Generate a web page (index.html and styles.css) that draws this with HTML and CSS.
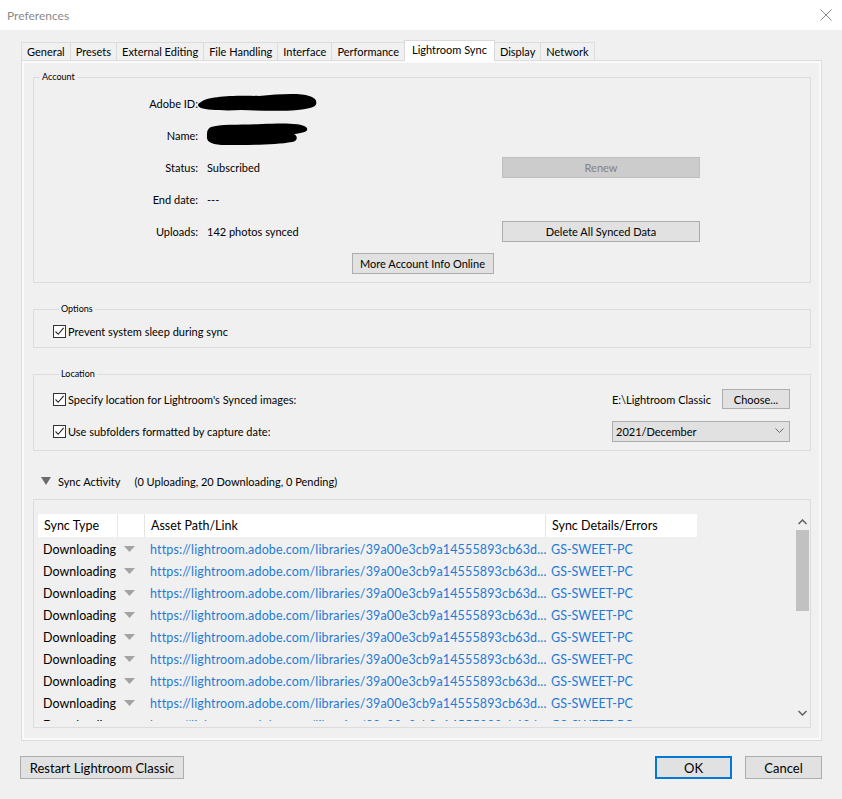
FILE: index.html
```html
<!DOCTYPE html>
<html lang="en">
<head>
    <meta charset="UTF-8">
    <title>Preferences</title>
    <link rel="stylesheet" href="styles.css">
</head>
<body>
    <div class="titlebar">
        <span class="title">Preferences</span>
        <svg class="close" width="12" height="12" viewBox="0 0 12 12">
            <path d="M0.5 0.5 L11.5 11.5 M11.5 0.5 L0.5 11.5" stroke="#8c8c8c" stroke-width="1" fill="none"/>
        </svg>
    </div>

    <div class="dialog">
        <div class="tabs">
            <div class="tab">General</div>
            <div class="tab">Presets</div>
            <div class="tab">External Editing</div>
            <div class="tab">File Handling</div>
            <div class="tab">Interface</div>
            <div class="tab">Performance</div>
            <div class="tab active">Lightroom Sync</div>
            <div class="tab">Display</div>
            <div class="tab">Network</div>
        </div>

        <div class="panel">
            <!-- Account -->
            <fieldset class="group account">
                <legend>Account</legend>
                <div class="acc-row">
                    <span class="label">Adobe ID:</span>
                    <span class="value">
                        <svg class="redact id" width="122" height="20" viewBox="0 0 122 20">
                            <path d="M4 9 C10 3 40 2 62 3 C82 1 104 0 112 3 C121 5 121 12 116 14 C104 19 70 18 44 17 C28 18 10 17 4 15 C0 13 0 11 4 9 Z" fill="#000"/>
                        </svg>
                    </span>
                </div>
                <div class="acc-row">
                    <span class="label">Name:</span>
                    <span class="value">
                        <svg class="redact name" width="104" height="24" viewBox="0 0 104 24">
                            <path d="M5 4 C14 1 36 2 56 1 C76 0 96 0 100 4 C104 8 98 10 88 11 C92 13 92 18 86 19 C70 22 40 22 20 22 C6 22 0 19 1 13 C1 9 1 6 5 4 Z" fill="#000"/>
                        </svg>
                    </span>
                </div>
                <div class="acc-row">
                    <span class="label">Status:</span>
                    <span class="value">Subscribed</span>
                    <button class="btn wide" disabled>Renew</button>
                </div>
                <div class="acc-row">
                    <span class="label">End date:</span>
                    <span class="value">---</span>
                </div>
                <div class="acc-row">
                    <span class="label">Uploads:</span>
                    <span class="value">142 photos synced</span>
                    <button class="btn wide">Delete All Synced Data</button>
                </div>
                <div class="acc-row center">
                    <button class="btn more">More Account Info Online</button>
                </div>
            </fieldset>

            <!-- Options -->
            <fieldset class="group options">
                <legend>Options</legend>
                <label class="check-row">
                    <span class="checkbox"><svg width="11" height="11" viewBox="0 0 11 11"><path d="M1.5 5.5 L4.2 8.3 L9.6 1.8" stroke="#222" stroke-width="1.1" fill="none"/></svg></span>
                    Prevent system sleep during sync
                </label>
            </fieldset>

            <!-- Location -->
            <fieldset class="group location">
                <legend>Location</legend>
                <div class="loc-row">
                    <label class="check-row">
                        <span class="checkbox"><svg width="11" height="11" viewBox="0 0 11 11"><path d="M1.5 5.5 L4.2 8.3 L9.6 1.8" stroke="#222" stroke-width="1.1" fill="none"/></svg></span>
                        Specify location for Lightroom's Synced images:
                    </label>
                    <div class="loc-right">
                        <span class="path">E:\Lightroom Classic</span>
                        <button class="btn choose">Choose...</button>
                    </div>
                </div>
                <div class="loc-row">
                    <label class="check-row">
                        <span class="checkbox"><svg width="11" height="11" viewBox="0 0 11 11"><path d="M1.5 5.5 L4.2 8.3 L9.6 1.8" stroke="#222" stroke-width="1.1" fill="none"/></svg></span>
                        Use subfolders formatted by capture date:
                    </label>
                    <div class="select">
                        <span>2021/December</span>
                        <svg width="9" height="6" viewBox="0 0 9 6"><path d="M0.5 0.5 L4.5 4.5 L8.5 0.5" stroke="#666" stroke-width="1" fill="none"/></svg>
                    </div>
                </div>
            </fieldset>

            <!-- Sync activity -->
            <div class="activity-head">
                <svg width="10" height="8" viewBox="0 0 10 8"><path d="M0 0 L10 0 L5 8 Z" fill="#6b6b6b"/></svg>
                <span class="act-title">Sync Activity</span>
                <span class="act-count">(0 Uploading, 20 Downloading, 0 Pending)</span>
            </div>

            <div class="activity">
                <div class="grid-wrap">
                    <div class="grid">
                        <div class="hcell c1">Sync Type</div>
                        <div class="hcell c2"></div>
                        <div class="hcell c3">Asset Path/Link</div>
                        <div class="hcell c4">Sync Details/Errors</div>
                    </div>
                    <div class="rows" id="rows"></div>
                </div>
                <div class="scrollbar">
                    <svg class="arrow" width="9" height="6" viewBox="0 0 9 6"><path d="M0.5 5 L4.5 1 L8.5 5" stroke="#606060" stroke-width="1.5" fill="none"/></svg>
                    <div class="track"><div class="thumb"></div></div>
                    <svg class="arrow" width="9" height="6" viewBox="0 0 9 6"><path d="M0.5 1 L4.5 5 L8.5 1" stroke="#606060" stroke-width="1.5" fill="none"/></svg>
                </div>
            </div>
        </div>

        <div class="footer">
            <button class="btn restart">Restart Lightroom Classic</button>
            <div class="footer-right">
                <button class="btn ok">OK</button>
                <button class="btn cancel">Cancel</button>
            </div>
        </div>
    </div>

    <script>
        // rows of sync activity
        const rows = document.getElementById('rows');
        for (let i = 0; i < 9; i++) {
            const row = document.createElement('div');
            row.className = 'row';
            row.innerHTML =
                '<div class="c1">Downloading</div>' +
                '<div class="c2"><svg width="11" height="6" viewBox="0 0 11 6"><path d="M0 0 L11 0 L5.5 6 Z" fill="#a3a3a3"/></svg></div>' +
                '<div class="c3 link">https://lightroom.adobe.com/libraries/39a00e3cb9a14555893cb63d...</div>' +
                '<div class="c4 link">GS-SWEET-PC</div>';
            rows.appendChild(row);
        }
    </script>
</body>
</html>
```

FILE: styles.css
```css
:root {
    --bg: #f0f0f0;
    --line: #dcdcdc;
    --btn: #e1e1e1;
    --btn-border: #adadad;
    --link: #1f7ad4;
}

body {
    margin: 0;
    background: var(--bg);
    font-family: Lato, "Noto Sans", sans-serif;
    font-size: 11px;
    color: #000;
    width: 842px;
    height: 799px;
    overflow: hidden;
}

.titlebar {
    height: 30px;
    background: #fff;
    display: flex;
    align-items: center;
    justify-content: space-between;
    padding: 0 10px 0 7px;
}

.title {
    color: #8a8a8a;
    font-size: 12px;
}

.dialog {
    padding: 10px 20px 0 21px;
}

/* tabs */
.tabs {
    display: flex;
    align-items: flex-end;
    height: 20px;
}

.tab {
    height: 17px;
    line-height: 17px;
    padding: 0 5px;
    font-size: 11px;
    border: 1px solid var(--line);
    border-bottom: none;
    margin-left: -1px;
    background: var(--bg);
}

.tab:first-child {
    margin-left: 0;
}

.tab.active {
    height: 20px;
    line-height: 18px;
    background: #fff;
    padding: 0 7px;
    position: relative;
    z-index: 1;
    margin-bottom: -1px;
    border-color: #d9d9d9;
}

.panel {
    border: 1px solid var(--line);
    box-shadow: inset 0 0 0 2px #fafafa;
    padding: 10px 10px 12px 11px;
}

/* group boxes */
.group {
    margin: 0;
    border: 1px solid var(--line);
    padding: 0;
    min-width: 0;
}

.group legend {
    font-size: 9px;
    line-height: 12px;
    padding: 0 2px;
    margin-left: 6px;
}

.account {
    padding: 4px 0 3px;
}

.acc-row {
    display: flex;
    align-items: center;
    height: 32px;
    white-space: nowrap;
}

.acc-row .label {
    width: 164px;
    text-align: right;
}

.acc-row .value {
    width: 295px;
    margin-left: 9px;
    display: flex;
    align-items: center;
}

.acc-row.center {
    justify-content: center;
}

.redact.id {
    margin-left: -10px;
}

.redact.name {
    margin-left: -1px;
}

.btn {
    font-family: inherit;
    font-size: 11px;
    background: var(--btn);
    border: 1px solid var(--btn-border);
    height: 21px;
    padding: 0;
    color: #000;
    white-space: nowrap;
}

.btn.wide {
    width: 198px;
}

.btn:disabled {
    background: #cccccc;
    border-color: #bfbfbf;
    color: #838383;
}

.btn.more {
    width: 142px;
    margin-left: 1px;
}

.options {
    margin-top: 20px;
    padding: 6px 19px 6px;
}

.check-row {
    display: flex;
    align-items: center;
    height: 20px;
    gap: 2px;
    white-space: nowrap;
}

.checkbox {
    width: 11px;
    height: 11px;
    border: 1px solid #333;
    background: #fff;
    display: flex;
}

.location {
    margin-top: 20px;
    padding: 3px 20px 3px 19px;
}

.loc-row {
    display: flex;
    align-items: center;
    justify-content: space-between;
    height: 32px;
}

.loc-right {
    display: flex;
    align-items: center;
    gap: 11px;
    white-space: nowrap;
}

.btn.choose {
    width: 68px;
    height: 20px;
}

.select {
    width: 168px;
    height: 19px;
    border: 1px solid var(--btn-border);
    background: var(--btn);
    display: flex;
    align-items: center;
    justify-content: space-between;
    padding: 0 5px 0 3px;
}

/* sync activity */
.activity-head {
    display: flex;
    align-items: center;
    height: 20px;
    margin-top: 20px;
    padding-left: 8px;
}

.act-title {
    margin-left: 7px;
}

.act-count {
    margin-left: 14px;
}

.activity {
    margin-top: 8px;
    border: 1px solid var(--line);
    height: 229px;
    display: flex;
    padding: 14px 0 0 4px;
    box-sizing: border-box;
}

.grid-wrap {
    flex: 1;
    height: 207px;
    overflow: hidden;
}

.grid {
    display: flex;
    height: 23px;
    font-size: 12.5px;
}

.hcell {
    background: #fff;
    line-height: 23px;
    padding-left: 6px;
    box-sizing: border-box;
    border-right: 1px solid #e6e6e6;
    white-space: nowrap;
}

.hcell.c4 {
    border-right: none;
}

.c1 { width: 80px; flex: none; }
.c2 { width: 27px; flex: none; }
.c3 { width: 401px; flex: none; }
.c4 { width: 151px; flex: none; }

.rows {
    padding-top: 1px;
}

.row {
    display: flex;
    height: 22px;
    align-items: center;
    font-size: 12.5px;
    white-space: nowrap;
}

.row > div {
    padding-left: 5px;
    box-sizing: border-box;
}

.row .c2 {
    display: flex;
    align-items: center;
    padding-left: 6px;
}

.row .c3 {
    letter-spacing: 0.15px;
}

.link {
    color: var(--link);
}

.scrollbar {
    width: 15px;
    height: 207px;
    display: flex;
    flex-direction: column;
    align-items: center;
}

.scrollbar .arrow {
    margin: 5px 0;
}

.track {
    flex: 1;
    width: 100%;
}

.thumb {
    width: 13px;
    margin: 0 auto;
    height: 81px;
    background: #c1c1c1;
}

.footer {
    display: flex;
    justify-content: space-between;
    margin-top: 15px;
    margin-left: -1px;
}

.btn.restart {
    width: 164px;
    height: 23px;
    font-size: 13px;
}

.footer-right {
    display: flex;
    gap: 13px;
}

.btn.ok,
.btn.cancel {
    width: 77px;
    height: 23px;
    font-size: 13px;
}

.btn.ok {
    border: 2px solid #0078d7;
}
```
